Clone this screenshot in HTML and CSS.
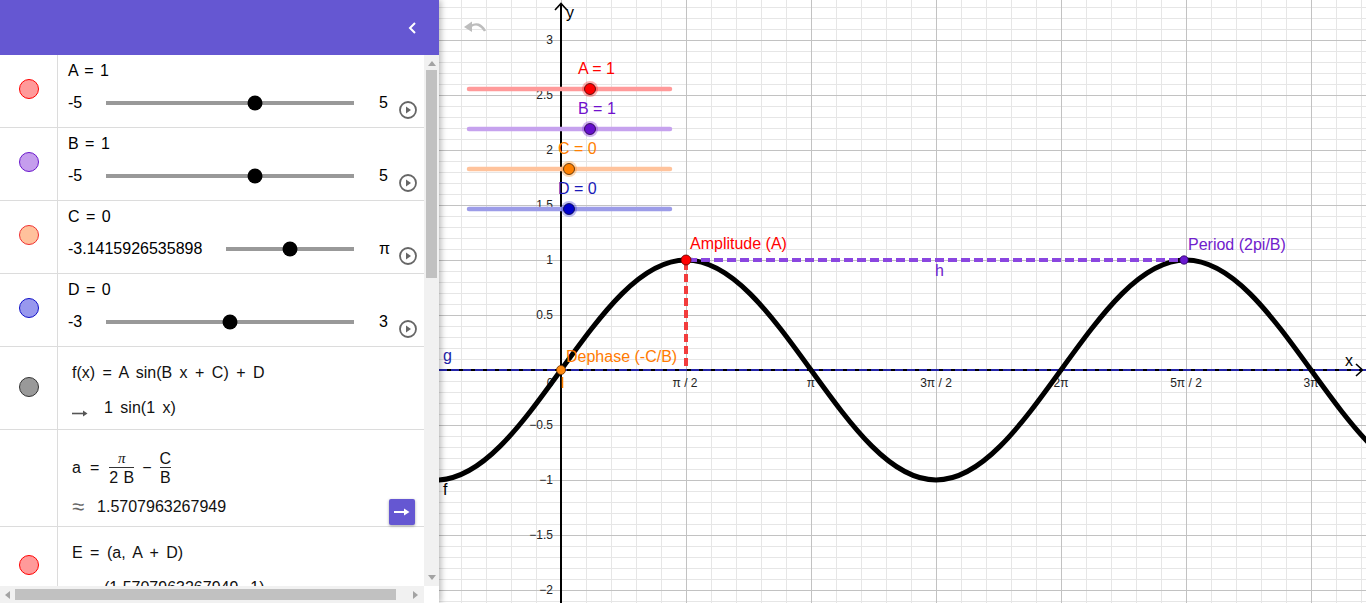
FILE: index.html
```html
<!DOCTYPE html>
<html>
<head>
<meta charset="utf-8">
<title>Sine graph</title>
<link rel="stylesheet" href="styles.css">
</head>
<body>
<div class="app">
  <aside class="algebra">
    <header class="av-header">
      <svg class="collapse" width="10" height="14" viewBox="0 0 10 14"><path d="M7 2 L2 7 L7 12" fill="none" stroke="#fff" stroke-width="2"/></svg>
    </header>
    <div class="av-main">
      <div class="av-list">
        <div class="row row-slider">
          <div class="marble-col"><span class="marble m-a"></span></div>
          <div class="content">
            <div class="label">A = 1</div>
            <div class="slider">
              <span class="min">-5</span>
              <span class="track"><span class="knob" style="left:60%"></span></span>
              <span class="max">5</span>
              <span class="play"><svg width="18" height="18" viewBox="0 0 18 18"><circle cx="9" cy="9" r="8" fill="none" stroke="#666" stroke-width="1.8"/><path d="M7 5.5 L12 9 L7 12.5 Z" fill="#666"/></svg></span>
            </div>
          </div>
        </div>
        <div class="row row-slider">
          <div class="marble-col"><span class="marble m-b"></span></div>
          <div class="content">
            <div class="label">B = 1</div>
            <div class="slider">
              <span class="min">-5</span>
              <span class="track"><span class="knob" style="left:60%"></span></span>
              <span class="max">5</span>
              <span class="play"><svg width="18" height="18" viewBox="0 0 18 18"><circle cx="9" cy="9" r="8" fill="none" stroke="#666" stroke-width="1.8"/><path d="M7 5.5 L12 9 L7 12.5 Z" fill="#666"/></svg></span>
            </div>
          </div>
        </div>
        <div class="row row-slider">
          <div class="marble-col"><span class="marble m-c"></span></div>
          <div class="content">
            <div class="label">C = 0</div>
            <div class="slider">
              <span class="min">-3.1415926535898</span>
              <span class="track"><span class="knob" style="left:50%"></span></span>
              <span class="max">π</span>
              <span class="play"><svg width="18" height="18" viewBox="0 0 18 18"><circle cx="9" cy="9" r="8" fill="none" stroke="#666" stroke-width="1.8"/><path d="M7 5.5 L12 9 L7 12.5 Z" fill="#666"/></svg></span>
            </div>
          </div>
        </div>
        <div class="row row-slider">
          <div class="marble-col"><span class="marble m-d"></span></div>
          <div class="content">
            <div class="label">D = 0</div>
            <div class="slider">
              <span class="min">-3</span>
              <span class="track"><span class="knob" style="left:50%"></span></span>
              <span class="max">3</span>
              <span class="play"><svg width="18" height="18" viewBox="0 0 18 18"><circle cx="9" cy="9" r="8" fill="none" stroke="#666" stroke-width="1.8"/><path d="M7 5.5 L12 9 L7 12.5 Z" fill="#666"/></svg></span>
            </div>
          </div>
        </div>
        <div class="row row-f">
          <div class="marble-col"><span class="marble m-f"></span></div>
          <div class="content math-content">
            <div class="math">f(x) = A sin(B x + C) + D</div>
            <div class="math result">
              <svg class="res-arrow" width="16" height="8" viewBox="0 0 16 8"><path d="M0 4.5 H13" stroke="#555" stroke-width="1.6"/><path d="M11 1.5 L15.5 4.5 L11 7.5 Z" fill="#555"/></svg>
              <span>1 sin(1 x)</span>
            </div>
          </div>
        </div>
        <div class="row row-a">
          <div class="marble-col"></div>
          <div class="content content-a">
            <div class="a-body">
              <div class="frac-line">
                <span class="math">a</span>
                <span class="math op">=</span>
                <span class="frac"><span class="num pi">π</span><span class="den">2 B</span></span>
                <span class="math op minus">−</span>
                <span class="frac"><span class="num">C</span><span class="den">B</span></span>
              </div>
              <div class="math approx-line"><span class="approx">≈</span><span>1.5707963267949</span></div>
            </div>
            <button class="action-btn" type="button"><svg width="16" height="10" viewBox="0 0 16 10"><path d="M0 5 H12" stroke="#fff" stroke-width="2"/><path d="M10 1.5 L15.5 5 L10 8.5 Z" fill="#fff"/></svg></button>
          </div>
        </div>
        <div class="row row-e">
          <div class="marble-col"><span class="marble m-e"></span></div>
          <div class="content math-content">
            <div class="math">E = (a, A + D)</div>
            <div class="math result">
              <svg class="res-arrow" width="16" height="8" viewBox="0 0 16 8"><path d="M0 4.5 H13" stroke="#555" stroke-width="1.6"/><path d="M11 1.5 L15.5 4.5 L11 7.5 Z" fill="#555"/></svg>
              <span>(1.5707963267949, 1)</span>
            </div>
          </div>
        </div>
      </div>
      <div class="vscroll">
        <span class="arr arr-up"></span>
        <span class="vthumb"></span>
        <span class="arr arr-down"></span>
      </div>
    </div>
    <div class="hscroll">
      <div class="hbar">
        <span class="arr arr-left"></span>
        <span class="hthumb"></span>
        <span class="arr arr-right"></span>
      </div>
      <div class="corner"></div>
    </div>
  </aside>

  <main class="graphics">
    <svg class="plot" width="927" height="603" viewBox="439 0 927 603">
      <defs>
        <pattern id="grid" x="561" y="370" width="125" height="55" patternUnits="userSpaceOnUse">
          <rect width="125" height="55" fill="#fff"/>
          <g fill="#e6e6e6">
            <rect x="25" width="1" height="55"/><rect x="50" width="1" height="55"/>
            <rect x="75" width="1" height="55"/><rect x="100" width="1" height="55"/>
            <rect y="11" width="125" height="1"/><rect y="22" width="125" height="1"/>
            <rect y="33" width="125" height="1"/><rect y="44" width="125" height="1"/>
          </g>
          <g fill="#c2c2c2">
            <rect width="1" height="55"/><rect width="125" height="1"/>
          </g>
        </pattern>
      </defs>
      <rect x="439" y="0" width="927" height="603" fill="url(#grid)"/>

      <!-- undo -->
      <path d="M471 26 Q479 21 485 31" fill="none" stroke="#bdbdbd" stroke-width="2.4"/>
      <path d="M464 27 L472 21.5 L472 32 Z" fill="#bdbdbd"/>

      <!-- axes -->
      <rect x="560" y="4" width="2" height="599" fill="#000"/>
      <path d="M555 10 L561 3.5 L567 10" fill="none" stroke="#000" stroke-width="1.6"/>
      <rect x="439" y="369" width="923" height="2" fill="#000"/>
      <path d="M1356 364 L1362.5 370 L1356 376" fill="none" stroke="#000" stroke-width="1.6"/>
      <text class="axis-name" x="566" y="18">y</text>
      <text class="axis-name" x="1345" y="366">x</text>

      <!-- y tick labels -->
      <g class="tick" text-anchor="end">
        <text x="553" y="44">3</text>
        <text x="553" y="99">2.5</text>
        <text x="553" y="154">2</text>
        <text x="553" y="209">1.5</text>
        <text x="553" y="264">1</text>
        <text x="553" y="319">0.5</text>
        <text x="553" y="429">−0.5</text>
        <text x="553" y="484">−1</text>
        <text x="553" y="539">−1.5</text>
        <text x="553" y="594">−2</text>
      </g>
      <!-- x tick labels -->
      <g class="tick" text-anchor="middle">
        <text x="550" y="387">0</text>
        <text x="685" y="387">π / 2</text>
        <text x="811" y="387">π</text>
        <text x="936" y="387">3π / 2</text>
        <text x="1061" y="387">2π</text>
        <text x="1186" y="387">5π / 2</text>
        <text x="1311" y="387">3π</text>
      </g>

      <!-- g line -->
      <line x1="439" y1="370" x2="1366" y2="370" stroke="#2424a8" stroke-width="2" stroke-dasharray="8 4"/>

      <!-- f curve -->
      <path d="M436,480 C481.24,480 520.23,426.35 561,370 C601.77,313.65 640.76,260 686,260 C731.24,260 770.23,313.65 811,370 C851.77,426.35 890.76,480 936,480 C981.24,480 1020.23,426.35 1061,370 C1101.77,313.65 1140.76,260 1186,260 C1231.24,260 1270.23,313.65 1311,370 C1351.77,426.35 1390.76,480 1436,480" fill="none" stroke="#000" stroke-width="5"/>

      <!-- dashed helpers -->
      <line x1="686" y1="262" x2="686" y2="370" stroke="#f23c3c" stroke-width="4" stroke-dasharray="8 4"/>
      <line x1="688" y1="260" x2="1184" y2="260" stroke="#8a46e0" stroke-width="4" stroke-dasharray="9 4"/>

      <!-- points -->
      <circle cx="686" cy="260" r="5" fill="#ff0000" stroke="#5a0000" stroke-width="0.8"/>
      <circle cx="1184" cy="260" r="4.2" fill="#6a1ad0" stroke="#2a0060" stroke-width="0.8"/>
      <circle cx="561" cy="370" r="4.5" fill="#ff8a10" stroke="#6a3000" stroke-width="0.8"/>
      <line x1="562.5" y1="377" x2="562.5" y2="388" stroke="#ff8000" stroke-width="1.5"/>

      <!-- labels -->
      <text class="lbl" x="690" y="249" fill="#f00">Amplitude (A)</text>
      <text class="lbl" x="1188" y="250" fill="#7020cc">Period (2pi/B)</text>
      <text class="lbl" x="935" y="276" fill="#7020cc">h</text>
      <text class="lbl" x="566" y="362" fill="#ff7a00">Dephase (-C/B)</text>
      <text class="lbl" x="443" y="361" fill="#1e1ea8">g</text>
      <text class="lbl" x="443" y="495" fill="#000">f</text>

      <!-- sliders -->
      <line x1="469" y1="89" x2="670" y2="89" stroke="#ff9a9a" stroke-width="4.5" stroke-linecap="round"/>
      <circle cx="590" cy="89" r="8" fill="#ff0000" fill-opacity="0.3"/>
      <circle cx="590" cy="89" r="5.5" fill="#ff0000" stroke="#400" stroke-width="0.8"/>
      <text class="lbl" x="578" y="74" fill="#f00">A = 1</text>

      <line x1="469" y1="129" x2="670" y2="129" stroke="#c6a2ee" stroke-width="4.5" stroke-linecap="round"/>
      <circle cx="590" cy="129" r="8" fill="#7a28d8" fill-opacity="0.35"/>
      <circle cx="590" cy="129" r="5.5" fill="#6610cc" stroke="#200040" stroke-width="0.8"/>
      <text class="lbl" x="578" y="114" fill="#7010cc">B = 1</text>

      <line x1="469" y1="169" x2="670" y2="169" stroke="#ffc39c" stroke-width="4.5" stroke-linecap="round"/>
      <circle cx="569" cy="169" r="8" fill="#ff8000" fill-opacity="0.3"/>
      <circle cx="569" cy="169" r="5.5" fill="#ff8000" stroke="#402000" stroke-width="0.8"/>
      <text class="lbl" x="558" y="154" fill="#ff8000">C = 0</text>

      <line x1="469" y1="209" x2="670" y2="209" stroke="#9c9ce8" stroke-width="4.5" stroke-linecap="round"/>
      <circle cx="569" cy="209" r="8" fill="#2020d0" fill-opacity="0.3"/>
      <circle cx="569" cy="209" r="5.5" fill="#0000cc" stroke="#000040" stroke-width="0.8"/>
      <text class="lbl" x="558" y="194" fill="#1a1ab8">D = 0</text>
    </svg>
  </main>
</div>
</body>
</html>
```

FILE: styles.css
```css
* { box-sizing: border-box; }
html, body { margin: 0; padding: 0; }
body {
  width: 1366px;
  height: 603px;
  overflow: hidden;
  background: #fff;
  font-family: "Liberation Sans", Arial, sans-serif;
  color: #000;
}
.app { display: flex; height: 603px; }

/* ---------- algebra view ---------- */
.algebra {
  width: 439px;
  flex: none;
  display: flex;
  flex-direction: column;
  position: relative;
  z-index: 2;
  background: #fff;
  box-shadow: 2px 0 6px rgba(0, 0, 0, 0.28);
}
.av-header {
  height: 55px;
  flex: none;
  background: #6557d2;
  display: flex;
  justify-content: flex-end;
  align-items: center;
  padding-right: 21px;
}
.collapse { display: block; }
.av-main { flex: 1; display: flex; min-height: 0; }
.av-list { width: 424px; flex: none; overflow: hidden; }

.row { display: flex; border-bottom: 1px solid #dcdcdc; }
.marble-col {
  width: 58px;
  flex: none;
  border-right: 1px solid #dcdcdc;
  display: flex;
  justify-content: center;
  align-items: flex-start;
}
.marble {
  display: block;
  width: 20px;
  height: 20px;
  border-radius: 50%;
  border: 1px solid;
}
.m-a, .m-e { background: #ff9a9a; border-color: #f00; }
.m-b { background: #c59ded; border-color: #6a18cc; }
.m-c { background: #ffc19c; border-color: #f03030; }
.m-d { background: #9898ee; border-color: #1010c8; }
.m-f { background: #999; border-color: #333; }

.content { flex: 1; min-width: 0; padding: 6px 7px 0 10px; }

.row-slider { height: 73px; }
.row-slider .marble { margin-top: 24px; }
.label { font-size: 16px; line-height: 20px; word-spacing: 2px; }
.slider {
  display: flex;
  align-items: center;
  height: 24px;
  margin-top: 10px;
  font-size: 16px;
}
.min { margin-right: 24px; }
.track {
  flex: 1;
  height: 4px;
  background: #999;
  position: relative;
}
.knob {
  position: absolute;
  top: 50%;
  width: 15px;
  height: 15px;
  border-radius: 50%;
  background: #000;
  transform: translate(-50%, -50%);
}
.max { margin-left: 25px; width: 9px; }
.play { margin-left: 11px; width: 18px; height: 18px; margin-top: 14px; }
.play svg { display: block; }

/* math rows */
.math-content { padding-top: 16px; padding-left: 14px; }
.math {
  font-size: 16px;
  line-height: 20px;
  word-spacing: 3px;
  color: #111;
  white-space: nowrap;
}
.result { display: flex; align-items: center; margin-top: 15px; }
.res-arrow { margin-right: 16px; margin-top: 9px; flex: none; }
.row-f { height: 83px; }
.row-f .marble { margin-top: 30px; }
.row-e { flex: 1; height: 80px; }
.row-e .marble { margin-top: 28px; }

.row-a { height: 97px; }
.content-a {
  display: flex;
  justify-content: space-between;
  padding: 20px 9px 0 14px;
}
.frac-line { display: flex; align-items: center; height: 36px; }
.op { margin: 0 9px 0 9px; }
.minus { margin: 0 7px; }
.frac {
  display: inline-flex;
  flex-direction: column;
  align-items: center;
  font-size: 16px;
  color: #111;
  padding: 0 1px;
}
.frac .num { line-height: 17px; }
.frac .pi { font-family: "Liberation Serif", serif; font-style: italic; font-size: 15px; }
.frac .den {
  line-height: 17px;
  border-top: 1px solid #333;
  padding-top: 1px;
  word-spacing: 1px;
}
.approx-line { display: flex; align-items: center; margin-top: 11px; }
.approx { font-size: 22px; color: #666; margin-right: 13px; }
.action-btn {
  width: 26px;
  height: 26px;
  margin-top: 49px;
  border: none;
  border-radius: 2px;
  background: #6557d2;
  box-shadow: 0 1px 3px rgba(0, 0, 0, 0.35);
  display: flex;
  align-items: center;
  justify-content: center;
  padding: 0;
}

/* scrollbars */
.vscroll {
  width: 15px;
  flex: none;
  background: #f1f1f1;
  display: flex;
  flex-direction: column;
  align-items: center;
  padding: 6px 0;
}
.vthumb {
  width: 11px;
  height: 208px;
  margin-top: 4px;
  background: #c1c1c1;
}
.arr { display: block; width: 0; height: 0; flex: none; }
.arr-up { border-left: 4px solid transparent; border-right: 4px solid transparent; border-bottom: 5px solid #a3a3a3; }
.arr-down { margin-top: auto; border-left: 4px solid transparent; border-right: 4px solid transparent; border-top: 5px solid #a3a3a3; }
.hscroll { height: 17px; flex: none; display: flex; }
.hbar {
  width: 424px;
  background: #f1f1f1;
  display: flex;
  align-items: center;
  padding: 0 6px 0 5px;
}
.arr-left { border-top: 4px solid transparent; border-bottom: 4px solid transparent; border-right: 5px solid #a3a3a3; }
.arr-right { margin-left: auto; border-top: 4px solid transparent; border-bottom: 4px solid transparent; border-left: 5px solid #a3a3a3; }
.hthumb { width: 381px; height: 11px; margin-left: 5px; background: #c1c1c1; }
.corner { flex: 1; background: #fff; }

/* ---------- graphics view ---------- */
.graphics { flex: 1; min-width: 0; position: relative; overflow: hidden; }
.plot { display: block; }
.plot text { font-family: "Liberation Sans", Arial, sans-serif; }
.tick { font-size: 12px; fill: #222; }
.axis-name { font-size: 16px; fill: #000; }
.lbl { font-size: 16px; }
```
